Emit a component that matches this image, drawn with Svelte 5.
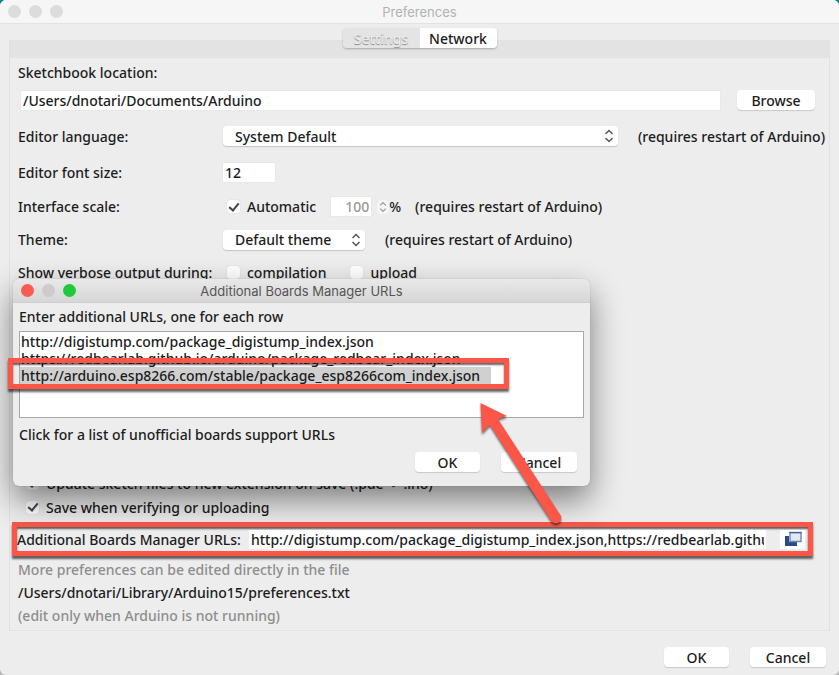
<script lang="ts">
  const restartNote = '(requires restart of Arduino)';

  let sketchbook = $state('/Users/dnotari/Documents/Arduino');
  let language = $state('System Default');
  let fontSize = $state('12');
  let autoScale = $state(true);
  let scale = $state('100');
  let theme = $state('Default theme');
  let verboseCompile = $state(false);
  let verboseUpload = $state(false);
  let updateSketch = $state(true);
  let saveOnVerify = $state(true);

  const urls = [
    'http://digistump.com/package_digistump_index.json',
    'https://redbearlab.github.io/arduino/package_redbear_index.json',
    'http://arduino.esp8266.com/stable/package_esp8266com_index.json',
  ];
  let boardUrls = $state(urls.join(','));
  let urlRows = $state(urls.join('\n'));
</script>

{#snippet arrows()}
  <svg class="arrows" viewBox="0 0 10 14" aria-hidden="true">
    <path d="M1.5 5 5 1.5 8.5 5M1.5 9 5 12.5 8.5 9" />
  </svg>
{/snippet}

<main class="window">
  <header class="titlebar">
    <span class="lights"><i></i><i></i><i></i></span>
    <h1>Preferences</h1>
  </header>

  <nav class="tabs">
    <button class="tab active">Settings</button>
    <button class="tab">Network</button>
  </nav>

  <section class="panel">
    <div class="row short"><label for="sketchbook">Sketchbook location:</label></div>
    <div class="row short location">
      <input id="sketchbook" class="text" bind:value={sketchbook} />
      <button class="btn browse">Browse</button>
    </div>

    <div class="fields">
      <div class="row tall">
        <label class="name" for="language">Editor language:</label>
        <span class="select grow">
          <select id="language" bind:value={language}><option>System Default</option></select>
          {@render arrows()}
        </span>
        <span class="note">{restartNote}</span>
      </div>
      <div class="row tall">
        <label class="name" for="font-size">Editor font size:</label>
        <input id="font-size" class="text size" bind:value={fontSize} />
      </div>
      <div class="row">
        <span class="name">Interface scale:</span>
        <label class="check"><input type="checkbox" bind:checked={autoScale} />Automatic</label>
        <input class="text scale" aria-label="Scale" disabled={autoScale} bind:value={scale} />
        <span class="stepper">{@render arrows()}</span>
        <span>%</span>
        <span class="note near">{restartNote}</span>
      </div>
      <div class="row">
        <label class="name" for="theme">Theme:</label>
        <span class="select theme">
          <select id="theme" bind:value={theme}><option>Default theme</option></select>
          {@render arrows()}
        </span>
        <span class="note">{restartNote}</span>
      </div>
      <div class="row">
        <span class="name">Show verbose output during:</span>
        <label class="check"><input type="checkbox" bind:checked={verboseCompile} />compilation</label>
        <label class="check second"><input type="checkbox" bind:checked={verboseUpload} />upload</label>
      </div>
    </div>

    <div class="options">
      <label class="check"><input type="checkbox" bind:checked={updateSketch} />Update sketch files to new extension on save (.pde -&gt; .ino)</label>
      <label class="check"><input type="checkbox" bind:checked={saveOnVerify} />Save when verifying or uploading</label>
    </div>

    <div class="boards">
      <label for="boards">Additional Boards Manager URLs:</label>
      <input id="boards" class="text" bind:value={boardUrls} />
      <button class="expand" aria-label="Edit URLs">
        <svg viewBox="0 0 18 16" aria-hidden="true">
          <path d="M1 5h4v6h8v4H1z" fill="#2c4a86" />
          <path d="M6 1.5h11v9H6z" fill="#e4e8f0" stroke="#6f86b4" stroke-width="1.4" />
          <path d="M5.4 1.6h12.2" stroke="#46629b" stroke-width="1.4" />
        </svg>
      </button>
    </div>

    <div class="file">
      <p>More preferences can be edited directly in the file</p>
      <p class="path">/Users/dnotari/Library/Arduino15/preferences.txt</p>
      <p>(edit only when Arduino is not running)</p>
    </div>
  </section>

  <footer>
    <button class="btn ok">OK</button>
    <button class="btn">Cancel</button>
  </footer>

  <div class="dialog" role="dialog" aria-labelledby="dialog-title">
    <header class="titlebar front">
      <span class="lights"><i class="close"></i><i></i><i class="zoom"></i></span>
      <h2 id="dialog-title">Additional Boards Manager URLs</h2>
    </header>
    <div class="body">
      <label for="url-rows">Enter additional URLs, one for each row</label>
      <div class="editor">
        <span class="selection"></span>
        <textarea id="url-rows" spellcheck="false" wrap="off" bind:value={urlRows}></textarea>
        <span class="callout"></span>
      </div>
      <a href="#unofficial">Click for a list of unofficial boards support URLs</a>
      <div class="actions">
        <button class="btn ok">OK</button>
        <button class="btn">Cancel</button>
      </div>
    </div>
  </div>

  <svg class="pointer" viewBox="0 0 100 135" aria-hidden="true">
    <path d="M10.5 8 37 21 28 24 91 121Q92 128 86 128.5 82 128 80 124L20 30 12 38z" />
  </svg>
</main>

<style>
  :global(body) {
    background: linear-gradient(#07858a 50%, #b4b4b4 50%);
  }
  .window {
    position: relative;
    display: flex;
    flex-direction: column;
    min-height: 100vh;
    overflow: hidden;
    border-radius: 6px;
    background: #ededed;
    color: #1c1c1c;
    font: 500 14px/17px 'Noto Sans', 'Open Sans', sans-serif;
  }
  button,
  input,
  select,
  textarea {
    box-sizing: border-box;
    margin: 0;
    border: 0;
    color: inherit;
    font: inherit;
  }
  h1,
  h2,
  p {
    margin: 0;
    font-weight: inherit;
  }

  .titlebar {
    display: grid;
    grid-template-columns: 1fr auto 1fr;
    align-items: center;
    height: 23px;
    padding: 0 8px;
    border-bottom: 1px solid #e2e2e2;
    background: #f6f6f6;
    color: #b2b2b2;
  }
  .titlebar h1,
  .titlebar h2 {
    padding-top: 2px;
    font: 400 13px/17px Inter, sans-serif;
  }
  .lights {
    display: flex;
    gap: 8px;
  }
  .lights i {
    width: 13px;
    height: 13px;
    border-radius: 50%;
    background: #dcdcdc;
  }
  .front .lights i {
    background: #cdcbcc;
  }
  .front .lights .close {
    background: #fb5a52;
  }
  .front .lights .zoom {
    background: #1fc93c;
  }

  .tabs {
    display: flex;
    z-index: 1;
    align-self: center;
    margin-top: 4px;
    border-radius: 4px;
    box-shadow: 0 1px 2px rgb(0 0 0 / 25%);
  }
  .tab {
    width: 77px;
    height: 20px;
    padding: 0;
    border-radius: 0 4px 4px 0;
    background: #fff;
  }
  .tab.active {
    border-radius: 4px 0 0 4px;
    background: #e4e4e4;
    color: #ececec;
    text-shadow: 0 1px 1px #888;
  }

  .panel {
    display: flex;
    flex: 1;
    flex-direction: column;
    margin: -8px 9px 0;
    padding-bottom: 3px;
    border: 1px solid #e1e1e1;
  }
  .panel::before {
    height: 17px;
    background: #e3e3e3;
    content: '';
  }
  .row {
    display: flex;
    align-items: center;
    height: 33px;
    padding: 0 4px 0 8px;
    white-space: nowrap;
  }
  .short {
    height: 28px;
  }
  .tall {
    height: 36px;
  }
  .location {
    gap: 17px;
    padding: 0 14px 0 11px;
  }
  .location .text {
    flex: 1;
  }
  .fields {
    margin-top: 4px;
  }
  .name {
    width: 205px;
  }
  .text {
    min-width: 0;
    height: 19px;
    padding: 0 2px;
    background: #fff;
    box-shadow: 0 0 1px #ccc;
  }
  .size {
    width: 52px;
  }
  .scale {
    width: 40px;
    margin-left: 15px;
    text-align: right;
  }
  .scale:disabled {
    color: #999;
  }
  .note {
    margin-left: 20px;
  }
  .near {
    margin-left: 14px;
  }

  .select {
    position: relative;
    display: flex;
  }
  .grow {
    flex: 1;
  }
  .theme {
    width: 142px;
  }
  select {
    width: 100%;
    height: 20px;
    padding: 0 12px;
    border-radius: 4px;
    appearance: none;
    background: #fff;
    box-shadow: 0 1px 1px #c4c4c4;
  }
  .arrows {
    width: 10px;
    height: 14px;
    fill: none;
    stroke: #555;
    stroke-width: 1.5;
  }
  .select .arrows {
    position: absolute;
    top: 3px;
    right: 4px;
    pointer-events: none;
  }
  .stepper {
    display: flex;
    justify-content: center;
    width: 12px;
    margin-left: 6px;
    border-radius: 4px;
    background: #f6f6f6;
  }
  .stepper .arrows {
    width: 8px;
    stroke: #999;
  }

  .check {
    display: flex;
    align-items: center;
    gap: 7px;
  }
  .check input {
    display: grid;
    place-items: center;
    width: 13px;
    height: 13px;
    margin-left: 4px;
    border-radius: 3px;
    appearance: none;
    background: #fff;
    box-shadow: 0 0 1px #bbb;
  }
  .check input:checked::before {
    width: 4px;
    height: 8px;
    border: solid #444;
    border-width: 0 2px 2px 0;
    content: '';
    transform: translateY(-1px) rotate(40deg);
  }
  .second {
    margin-left: 20px;
  }
  .options {
    margin-top: auto;
    padding-left: 12px;
  }
  .options .check {
    height: 24px;
  }

  .boards,
  .callout {
    border: 5px solid #fb5647;
    box-shadow:
      0 3px 2px rgb(0 0 0 / 60%),
      inset 0 2px 2px rgb(0 0 0 / 60%);
  }
  .boards {
    display: flex;
    align-items: center;
    height: 24px;
    margin: 3px 16px 0 2px;
    padding-right: 3px;
    white-space: nowrap;
  }
  .boards .text {
    flex: 1;
    margin: 0 14px 0 8px;
    box-shadow: none;
  }
  .expand {
    display: grid;
    place-items: center;
    width: 25px;
    height: 19px;
    padding: 0;
    background: #fff;
  }
  .expand svg {
    width: 18px;
    height: 16px;
  }
  .file {
    padding: 2px 8px 0;
    color: #8e8e8e;
    line-height: 23px;
  }
  .path {
    color: #1c1c1c;
  }

  .btn {
    width: 76px;
    height: 20px;
    padding: 0;
    border-radius: 4px;
    background: #fff;
    box-shadow: 0 1px 1px #c8c8c8;
  }
  .browse {
    width: 78px;
  }
  .ok {
    width: 65px;
  }
  footer,
  .actions {
    display: flex;
    justify-content: flex-end;
    gap: 21px;
  }
  footer {
    padding: 16px 13px 8px;
  }

  .dialog {
    position: absolute;
    top: 279px;
    left: 13px;
    width: 577px;
    border-radius: 6px;
    background: #ededed;
    box-shadow:
      0 0 1px rgb(0 0 0 / 40%),
      0 14px 32px rgb(0 0 0 / 48%);
  }
  .front {
    border-color: #cfcfcf;
    border-radius: 6px 6px 0 0;
    background: linear-gradient(#e9e9e9, #d6d6d6);
    color: #555;
  }
  .body {
    display: flex;
    flex-direction: column;
    padding: 5px 6px 14px;
  }
  .editor {
    position: relative;
    height: 87px;
    margin: 6px 0 8px;
    background: #fff;
  }
  .editor textarea {
    position: relative;
    display: block;
    width: 100%;
    height: 100%;
    padding: 1px;
    overflow: hidden;
    border: 1px solid #a8a8a8;
    background: none;
    resize: none;
    white-space: pre;
  }
  .selection {
    position: absolute;
    top: 36px;
    left: 1px;
    width: 471px;
    height: 18px;
    background: #d0d0d0;
  }
  .callout {
    position: absolute;
    top: 27px;
    left: -11px;
    width: 491px;
    height: 21px;
    pointer-events: none;
  }
  .body a {
    color: inherit;
    text-decoration: none;
  }
  .actions {
    margin-top: 9px;
    padding-right: 7px;
  }

  .pointer {
    position: absolute;
    top: 395px;
    left: 470px;
    width: 100px;
    height: 135px;
    fill: #fb5647;
    filter: drop-shadow(0 2px 1px rgb(0 0 0 / 55%));
    pointer-events: none;
  }
</style>
